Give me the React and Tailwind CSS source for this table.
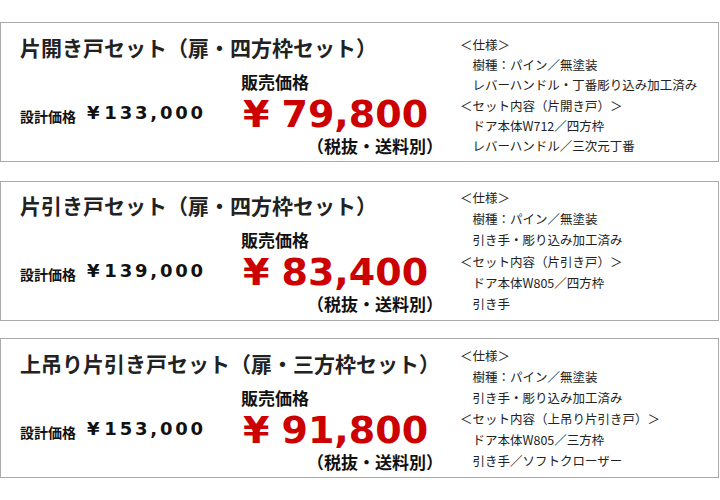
const sets = [
  {
    title: "片開き戸セット（扉・四方枠セット）",
    design: "133,000",
    price: "79,800",
    spec: [
      { t: "＜仕様＞" },
      { t: "樹種：パイン／無塗装", sub: true },
      { t: "レバーハンドル・丁番彫り込み加工済み", sub: true },
      { t: "＜セット内容（片開き戸）＞" },
      { t: "ドア本体W712／四方枠", sub: true },
      { t: "レバーハンドル／三次元丁番", sub: true },
    ],
    box: "mb-[19px]",
    titleCls: "pt-[10px]",
    specCls: "pt-[12px] leading-[20.2px]",
  },
  {
    title: "片引き戸セット（扉・四方枠セット）",
    design: "139,000",
    price: "83,400",
    spec: [
      { t: "＜仕様＞" },
      { t: "樹種：パイン／無塗装", sub: true },
      { t: "引き手・彫り込み加工済み", sub: true },
      { t: "＜セット内容（片引き戸）＞" },
      { t: "ドア本体W805／四方枠", sub: true },
      { t: "引き手", sub: true },
    ],
    box: "mb-[17px]",
    titleCls: "pt-[9px]",
    specCls: "pt-[5px] leading-[21.2px]",
  },
  {
    title: "上吊り片引き戸セット（扉・三方枠セット）",
    design: "153,000",
    price: "91,800",
    spec: [
      { t: "＜仕様＞" },
      { t: "樹種：パイン／無塗装", sub: true },
      { t: "引き手・彫り込み加工済み", sub: true },
      { t: "＜セット内容（上吊り片引き戸）＞" },
      { t: "ドア本体W805／三方枠", sub: true },
      { t: "引き手／ソフトクローザー", sub: true },
    ],
    box: "",
    titleCls: "pt-[10px]",
    specCls: "pt-[6px] leading-[21px]",
  },
];

const num = { fontFamily: '"DejaVu Sans", Verdana, sans-serif' };

function SetBox({ item }) {
  return (
    <div className={`h-[140px] w-[719px] border border-[#aaaaaa] flex ${item.box}`}>
      <div className={`w-[440px] shrink-0 pl-[19px] ${item.titleCls}`}>
        <h2 className="text-[21px] font-bold leading-[28px] text-[#222] whitespace-nowrap">{item.title}</h2>
        <div className="flex mt-[11px]">
          {/* 設計価格 */}
          <div className="w-[221px] flex items-start">
            <span className="mt-[34px] text-[14px] font-bold text-[#111] leading-[20px]">設計価格</span>
            <span
              className="mt-[32px] ml-[11px] text-[18px] font-bold text-[#111] leading-[18px] tracking-[2.8px] whitespace-nowrap"
              style={num}
            >
              <span className="mr-[2px]">¥</span>
              {item.design}
            </span>
          </div>
          {/* 販売価格 */}
          <div className="w-[195px] flex flex-col">
            <span className="text-[17px] font-bold text-[#111] leading-[20px]">販売価格</span>
            <span
              className="mt-[3px] pl-[2px] text-[38px] font-bold text-[#cc0000] leading-[38px] whitespace-nowrap"
              style={num}
            >
              <span className="mr-[12px]">¥</span>
              {item.price}
            </span>
            <span className="self-end mt-[3px] mr-[-7px] text-[17px] font-bold text-[#111] leading-[20px]">
              （税抜・送料別）
            </span>
          </div>
        </div>
      </div>
      <div className={`pl-[19px] text-[12.5px] text-[#222] ${item.specCls}`}>
        {item.spec.map((s, i) => (
          <div key={i} className="whitespace-nowrap">
            {s.sub ? "　" : ""}
            {s.t}
          </div>
        ))}
      </div>
    </div>
  );
}

export default function App() {
  return (
    <div
      className="w-[720px] h-[500px] bg-white pt-[22px] overflow-hidden"
      style={{ fontFamily: '"Noto Sans CJK JP", "Noto Sans", sans-serif' }}
    >
      {sets.map((item, i) => (
        <SetBox key={i} item={item} />
      ))}
    </div>
  );
}
